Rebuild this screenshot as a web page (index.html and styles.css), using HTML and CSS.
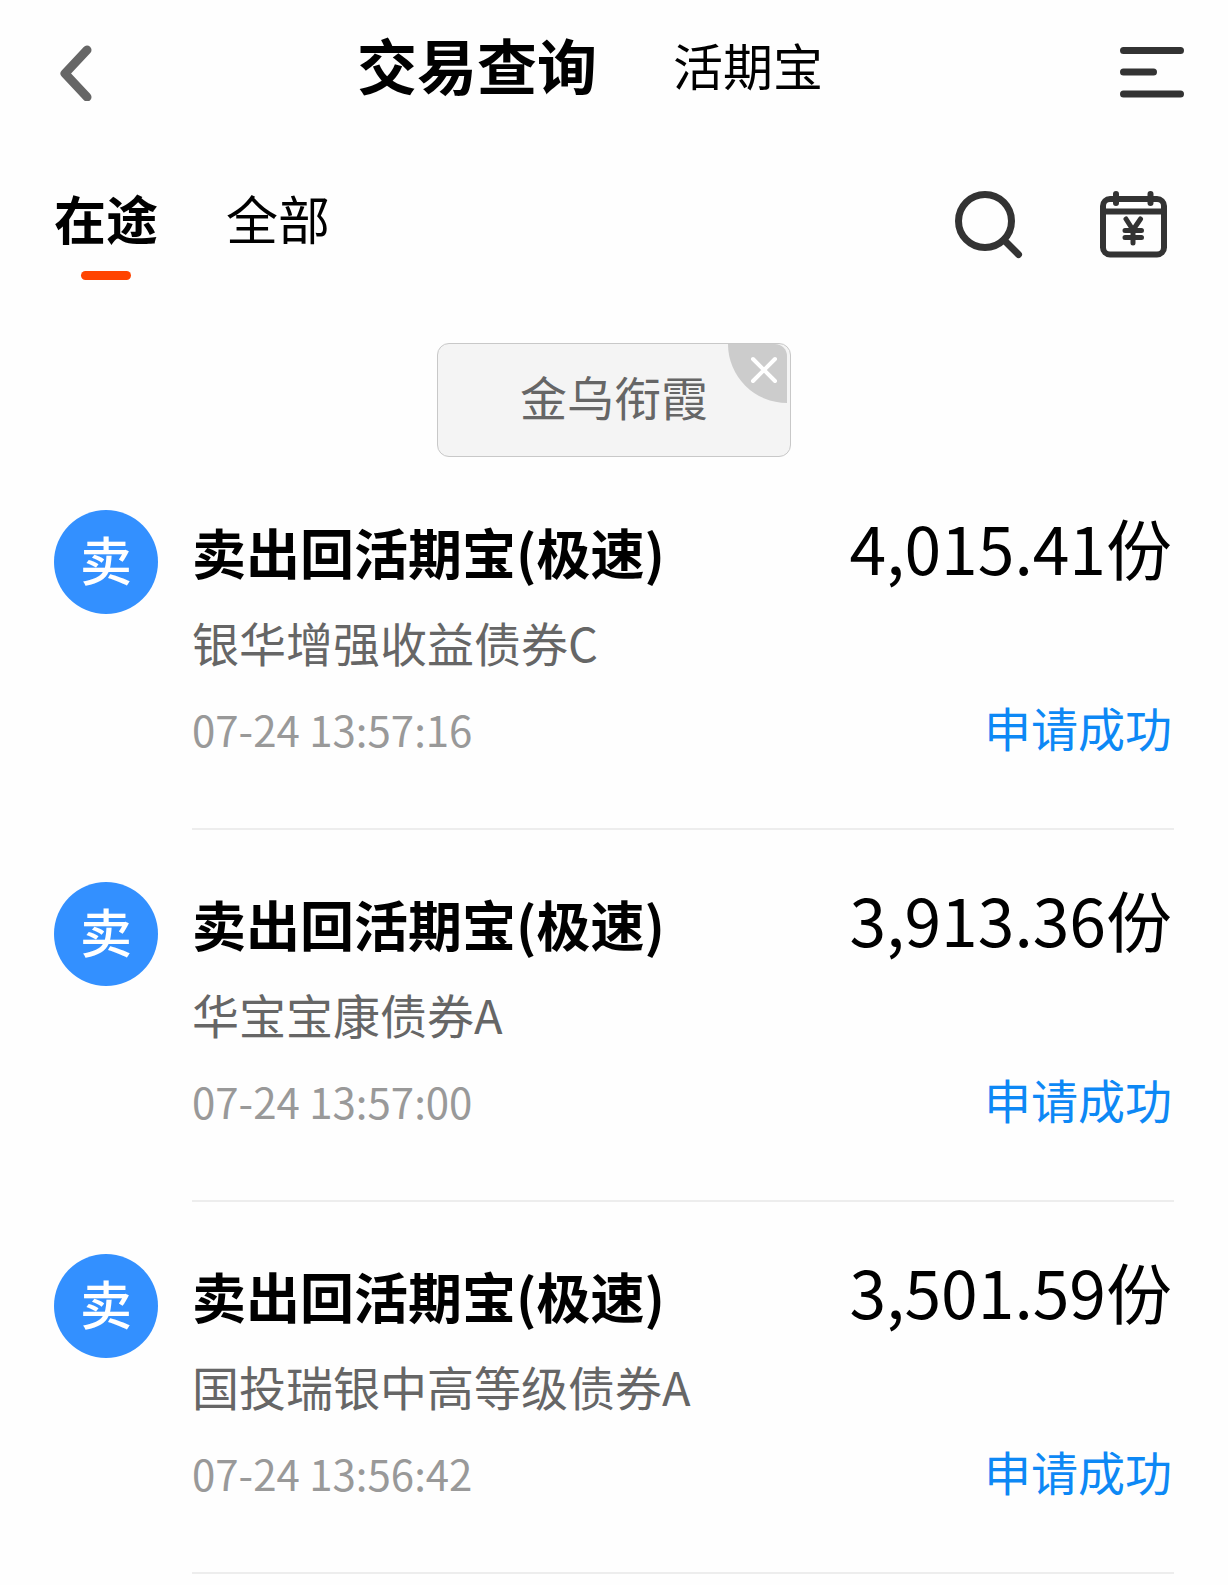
FILE: index.html
```html
<!DOCTYPE html>
<html lang="zh-CN">
<head>
    <meta charset="UTF-8">
    <meta name="viewport" content="width=device-width, initial-scale=1.0">
    <title>交易查询</title>
    <link rel="stylesheet" href="styles.css">
</head>
<body>
    <header class="header">
        <button class="back-btn" aria-label="返回">
            <svg width="32" height="56" viewBox="0 0 32 56">
                <path d="M27 5L5 28.5L27 52" fill="none" stroke="#666" stroke-width="9" stroke-linecap="round" stroke-linejoin="round"/>
            </svg>
        </button>
        <nav class="header-nav">
            <h1>交易查询</h1>
            <a href="#">活期宝</a>
        </nav>
        <button class="menu-btn" aria-label="菜单">
            <svg width="64" height="52" viewBox="0 0 64 52">
                <path d="M3.5 3.5H60.5M3.5 25H33.5M3.5 47H60.5" stroke="#333" stroke-width="7" stroke-linecap="round"/>
            </svg>
        </button>
    </header>

    <div class="toolbar">
        <div class="tabs">
            <button class="tab active">在途</button>
            <button class="tab">全部</button>
        </div>
        <div class="tools">
            <button aria-label="搜索">
                <svg width="68" height="68" viewBox="0 0 68 68" fill="none" stroke="#333" stroke-width="7">
                    <circle cx="30" cy="30" r="26.5"/>
                    <path d="M49 49L63.5 63.5" stroke-linecap="round"/>
                </svg>
            </button>
            <button aria-label="交易日历">
                <svg width="68" height="68" viewBox="0 0 68 68" fill="none" stroke="#333" stroke-width="6" stroke-linecap="round">
                    <rect x="3" y="8" width="61" height="55.5" rx="7"/>
                    <path d="M3 20.5H64" stroke-linecap="butt"/>
                    <path d="M16 3V12M50.5 3V12"/>
                    <path d="M26 28L33 39L40.5 28M33 39V52M25 39.5H41.5M25 46.5H41.5" stroke-width="5"/>
                </svg>
            </button>
        </div>
    </div>

    <!-- Current filter -->
    <div class="filter">
        <span>金乌衔霞</span>
        <button class="filter-close" aria-label="清除">
            <svg width="60" height="60" viewBox="0 0 60 60">
                <path d="M0 0H47A12 12 0 0 1 59 12V59A59 59 0 0 1 0 0Z" fill="#ccc"/>
                <path d="M25 15L47 37M47 15L25 37" stroke="#fff" stroke-width="4" stroke-linecap="round"/>
            </svg>
        </button>
    </div>

    <ul class="list">
        <li class="item">
            <div class="badge">卖</div>
            <div class="content">
                <div class="row main">
                    <h2>卖出回活期宝(极速)</h2>
                    <span class="amount">4,015.41份</span>
                </div>
                <p class="fund">银华增强收益债券C</p>
                <div class="row">
                    <time>07-24 13:57:16</time>
                    <span class="status">申请成功</span>
                </div>
            </div>
        </li>
        <li class="item">
            <div class="badge">卖</div>
            <div class="content">
                <div class="row main">
                    <h2>卖出回活期宝(极速)</h2>
                    <span class="amount">3,913.36份</span>
                </div>
                <p class="fund">华宝宝康债券A</p>
                <div class="row">
                    <time>07-24 13:57:00</time>
                    <span class="status">申请成功</span>
                </div>
            </div>
        </li>
        <li class="item">
            <div class="badge">卖</div>
            <div class="content">
                <div class="row main">
                    <h2>卖出回活期宝(极速)</h2>
                    <span class="amount">3,501.59份</span>
                </div>
                <p class="fund">国投瑞银中高等级债券A</p>
                <div class="row">
                    <time>07-24 13:56:42</time>
                    <span class="status">申请成功</span>
                </div>
            </div>
        </li>
    </ul>
</body>
</html>
```
FILE: styles.css
```css
* {
    box-sizing: border-box;
}

body {
    margin: 0;
    background: #fefefe;
    color: #000;
    font-family: "Noto Sans CJK SC", sans-serif;
}

h1, h2, p, ul {
    margin: 0;
    padding: 0;
}

button {
    padding: 0;
    border: none;
    background: none;
    font-family: inherit;
    color: inherit;
    cursor: pointer;
}

svg {
    display: block;
}

/* Header */
.header {
    display: flex;
    align-items: center;
    padding: 18px 44px 0 60px;
}

.back-btn {
    width: 64px;
}

.header-nav {
    flex: 1;
    display: flex;
    justify-content: center;
    align-items: center;
    gap: 76px;
    line-height: 92px;
    padding-bottom: 18px;
}

.header-nav h1 {
    font-size: 60px;
    font-weight: bold;
}

.header-nav a {
    font-size: 50px;
    color: #000;
    text-decoration: none;
}

.menu-btn {
    width: 128px;
    display: flex;
    justify-content: flex-end;
}

/* Tabs and tools */
.toolbar {
    display: flex;
    justify-content: space-between;
    align-items: flex-start;
    padding: 58px 60px 0 54px;
}

.tabs {
    display: flex;
    align-items: flex-start;
    gap: 68px;
}

.tab {
    font-size: 52px;
    line-height: 64px;
}

.tab.active {
    font-weight: bold;
}

.tab.active::after {
    content: "";
    display: block;
    width: 50px;
    height: 9px;
    margin: 21px auto 0;
    border-radius: 5px;
    background: #ff4400;
}

.tools {
    display: flex;
    gap: 77px;
    padding-top: 5px;
}

/* Filter chip */
.filter {
    position: relative;
    width: fit-content;
    margin: 63px auto 0;
    padding: 22px 82px 30px;
    border: 1px solid #c8c8c8;
    border-radius: 12px;
    background: #f4f4f4;
    color: #666;
    font-size: 47px;
    line-height: 60px;
}

.filter-close {
    position: absolute;
    top: 0;
    right: 2px;
}

/* Records */
.list {
    list-style: none;
    padding-top: 1px;
}

.item {
    display: flex;
    gap: 34px;
    padding: 52px 54px 0;
}

.badge {
    flex: none;
    width: 104px;
    height: 104px;
    border-radius: 50%;
    background: #3390ff;
    color: #fff;
    font-size: 52px;
    font-weight: 500;
    line-height: 98px;
    text-align: center;
}

.content {
    flex: 1;
    padding-bottom: 69px;
    border-bottom: 2px solid #ededed;
}

.row {
    display: flex;
    justify-content: space-between;
    align-items: baseline;
    line-height: 60px;
    padding-right: 2px;
}

.main {
    line-height: 72px;
}

.main h2 {
    font-size: 54px;
    font-weight: bold;
}

.amount {
    font-size: 66px;
}

.fund {
    margin: 24px 0 25px;
    color: #666;
    font-size: 47px;
    line-height: 60px;
}

time {
    color: #999;
    font-size: 42px;
}

.status {
    color: #0d88f5;
    font-size: 47px;
}
```
